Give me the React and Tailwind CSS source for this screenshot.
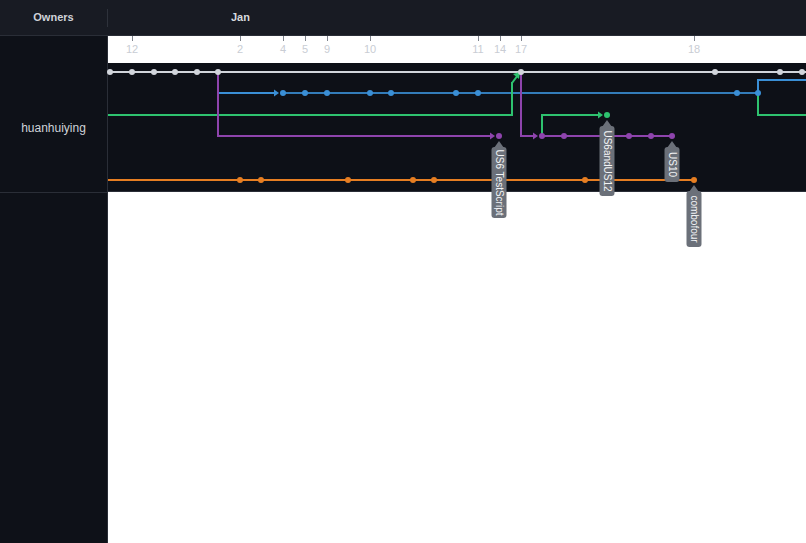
const C = {
  white: "#d1d5db",
  blue: "#3a8fd6",
  green: "#2ec26f",
  purple: "#8e44ad",
  orange: "#e67e22",
};

const ticks = [
  [24, "12"], [132, "2"], [175, "4"], [197, "5"], [219, "9"], [262, "10"],
  [370, "11"], [392, "14"], [413, "17"], [586, "18"],
];

const Dot = ({ x, y, c }) => <circle cx={x} cy={y} r="3" fill={c} />;

const Arrow = ({ x, y, c }) => (
  <path d={`M${x - 5} ${y - 3.5} L${x} ${y} L${x - 5} ${y + 3.5} Z`} fill={c} />
);

const Tag = ({ x, y, h, text }) => (
  <g>
    <path d={`M${x} ${y} L${x + 5} ${y + 7} L${x - 5} ${y + 7} Z`} fill="#6b7079" />
    <rect x={x - 7.5} y={y + 6} width="15" height={h} rx="3" fill="#6b7079" />
    <text
      x={x}
      y={y + 6 + h / 2}
      transform={`rotate(90 ${x} ${y + 6 + h / 2})`}
      textAnchor="middle"
      dominantBaseline="central"
      fontSize="10"
      fill="#f3f4f6"
      fontFamily="'Liberation Sans', Arial, sans-serif"
    >
      {text}
    </text>
  </g>
);

const Graph = () => (
  <svg className="absolute left-0 top-0 overflow-visible" width="698" height="129">
    {/* white trunk */}
    <line x1="2" y1="9" x2="698" y2="9" stroke={C.white} strokeWidth="2" />

    {/* blue */}
    <path d="M110 9 V30 H168" stroke={C.blue} strokeWidth="2" fill="none" />
    <Arrow x={171} y={30} c={C.blue} />
    <line x1="175" y1="30" x2="650" y2="30" stroke={C.blue} strokeWidth="2" opacity="0.85" />
    <path d="M650 30 V17 H698" stroke={C.blue} strokeWidth="2" fill="none" />

    {/* green */}
    <path d="M0 52 H404 V19" stroke={C.green} strokeWidth="2" fill="none" />
    <path d="M404 20 L410 12" stroke={C.green} strokeWidth="2" />
    <path d="M412 9 L411 16 L405 11 Z" fill={C.green} />
    <path d="M434 73 V52 H490" stroke={C.green} strokeWidth="2" fill="none" />
    <Arrow x={495} y={52} c={C.green} />
    <path d="M650 30 V52 H698" stroke={C.green} strokeWidth="2" fill="none" />

    {/* purple */}
    <path d="M110 9 V73 H382" stroke={C.purple} strokeWidth="2" fill="none" />
    <Arrow x={387} y={73} c={C.purple} />
    <path d="M413 9 V73 H425" stroke={C.purple} strokeWidth="2" fill="none" />
    <Arrow x={430} y={73} c={C.purple} />
    <line x1="434" y1="73" x2="564" y2="73" stroke={C.purple} strokeWidth="2" />

    {/* orange */}
    <line x1="0" y1="117" x2="586" y2="117" stroke={C.orange} strokeWidth="2" />

    {[2, 24, 46, 67, 89, 110, 413, 607, 672, 694].map((x) => (
      <Dot key={"w" + x} x={x} y={9} c={C.white} />
    ))}
    {[175, 197, 219, 262, 283, 348, 370, 629, 650].map((x) => (
      <Dot key={"b" + x} x={x} y={30} c={C.blue} />
    ))}
    <Dot x={499} y={52} c={C.green} />
    {[391, 434, 456, 521, 543, 564].map((x) => (
      <Dot key={"p" + x} x={x} y={73} c={C.purple} />
    ))}
    {[132, 153, 240, 305, 326, 477, 586].map((x) => (
      <Dot key={"o" + x} x={x} y={117} c={C.orange} />
    ))}

    <Tag x={391} y={78} h={71} text="US6 TestScript" />
    <Tag x={499} y={57} h={70} text="US6andUS12" />
    <Tag x={564} y={78} h={35} text="US10" />
    <Tag x={586} y={122} h={56} text="combofour" />
  </svg>
);

export default function App() {
  return (
    <div
      className="w-[806px] h-[543px] overflow-hidden bg-white flex flex-col"
      style={{ fontFamily: "'Liberation Sans', Arial, sans-serif" }}
    >
      <div className="h-[36px] shrink-0 flex items-center bg-[#181b23] border-b border-[#2a2e37]">
        <div className="w-[107px] text-center text-[11px] font-semibold text-[#cfd3d9]">Owners</div>
        <div className="w-px h-[18px] bg-[#2e323b]" />
        <div className="pl-[123px] text-[11px] font-bold text-[#d7dade]">Jan</div>
      </div>
      <div className="flex flex-1">
        <div className="w-[108px] shrink-0 bg-[#0e1118] border-r border-[#2a2e37] flex flex-col">
          <div className="h-[27px]" />
          <div className="h-[130px] border-b border-[#2a2e37] flex items-center justify-center text-[12px] text-[#cfd3d9]">
            huanhuiying
          </div>
        </div>
        <div className="flex-1 flex flex-col">
          <div className="relative h-[27px]">
            {ticks.map(([x, t]) => (
              <div key={t} className="absolute top-0 flex flex-col items-center w-[20px] -ml-[10px]" style={{ left: x }}>
                <div className="w-px h-[5px] bg-[#7f848d]" />
                <div className="mt-[2px] text-[11px] leading-[13px] text-[#c9cdd4]">{t}</div>
              </div>
            ))}
          </div>
          <div className="relative h-[129px] bg-[#0d1017] border-b border-[#2a2e37]">
            <Graph />
          </div>
        </div>
      </div>
    </div>
  );
}
